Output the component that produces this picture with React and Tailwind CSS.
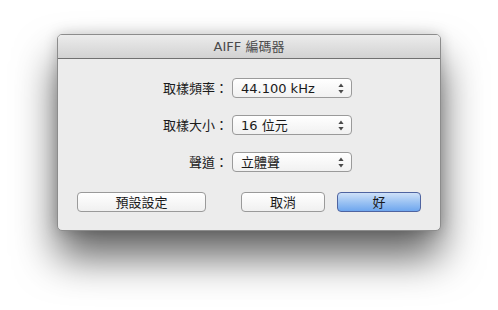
import React from "react";

const font = {
  fontFamily: '"DejaVu Sans", "Noto Sans CJK TC", sans-serif',
};

const Arrows = () => (
  <svg width="6" height="11" viewBox="0 0 6 11" className="shrink-0">
    <path d="M3 0.5 L5.6 4 L0.4 4 Z" fill="#4a4a4a" />
    <path d="M3 10.5 L5.6 7 L0.4 7 Z" fill="#4a4a4a" />
  </svg>
);

const Popup = ({ value }) => (
  <div className="w-[120px] h-[20px] flex items-center justify-between pl-[8px] pr-[7px] rounded-[4px] border border-[#9a9a9a] bg-gradient-to-b from-[#ffffff] to-[#f1f1f1] text-[13px] text-[#1a1a1a]">
    <span className="leading-none">{value}</span>
    <Arrows />
  </div>
);

const Row = ({ label, value }) => (
  <div className="flex items-center h-[20px]">
    <div className="w-[172px] text-right pr-[4px] text-[13px] text-[#1a1a1a] leading-none">
      {label}
    </div>
    <Popup value={value} />
  </div>
);

const Button = ({ children, width, primary }) => (
  <div
    className={
      "h-[20px] flex items-center justify-center rounded-[4px] text-[13px] leading-none text-[#1a1a1a] " +
      (primary
        ? "border border-[#4f64a0] bg-gradient-to-b from-[#cfe1f8] via-[#9cc3f3] to-[#6ea6ee]"
        : "border border-[#9a9a9a] bg-gradient-to-b from-[#ffffff] to-[#f0f0f0]")
    }
    style={{ width }}
  >
    {children}
  </div>
);

export default function App() {
  return (
    <div className="w-[498px] h-[310px] bg-white overflow-hidden" style={font}>
      <div className="pt-[34px] pl-[57px]">
        <div className="w-[384px] h-[197px] rounded-[5px] border border-[#8c8c8c] bg-[#ececec] shadow-[0_26px_42px_rgba(0,0,0,0.62),0_0_14px_rgba(0,0,0,0.18)] overflow-hidden flex flex-col">
          <div className="h-[24px] shrink-0 flex items-center justify-center bg-gradient-to-b from-[#ececec] to-[#d2d2d2] border-b border-[#707070] text-[13px] text-[#4a4a4a]">
            AIFF 編碼器
          </div>
          <div className="flex flex-col gap-[17px] pt-[19px] pl-[2px]">
            <Row label="取樣頻率：" value="44.100 kHz" />
            <Row label="取樣大小：" value="16 位元" />
            <Row label="聲道：" value="立體聲" />
          </div>
          <div className="flex items-center mt-[20px] pl-[19px]">
            <Button width="129px">預設設定</Button>
            <div className="ml-[35px]">
              <Button width="84px">取消</Button>
            </div>
            <div className="ml-[12px]">
              <Button width="84px" primary>
                好
              </Button>
            </div>
          </div>
        </div>
      </div>
    </div>
  );
}
